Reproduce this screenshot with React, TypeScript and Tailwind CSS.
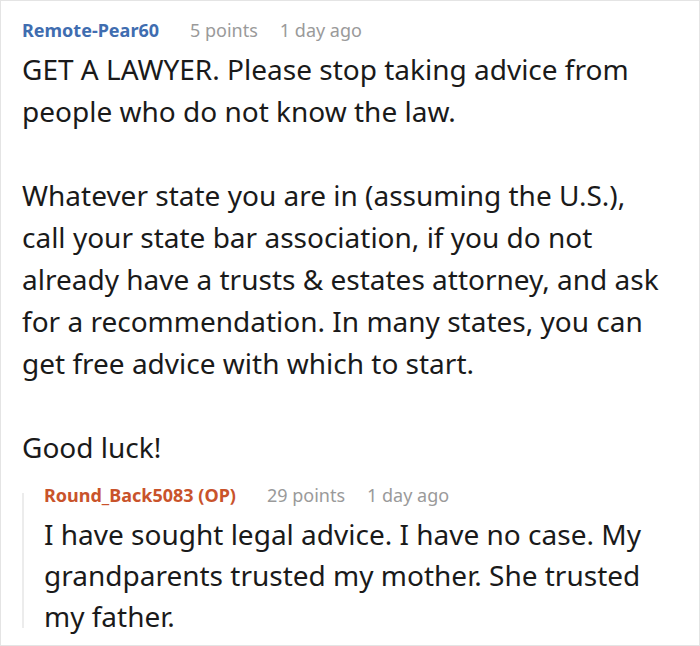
export default function App() {
  const body = "text-[28px] text-[#1a1a1a]";
  return (
    <div
      className="w-[700px] h-[646px] bg-white border border-[#e4e4e4] pl-[21px] overflow-hidden"
      style={{ fontFamily: '"Noto Sans", "Open Sans", sans-serif' }}
    >
      <div className="mt-[17px] flex items-center text-[18px] leading-[24px]">
        <span className="font-bold text-[#3f6db0] mr-[31px]">Remote-Pear60</span>
        <span className="text-[#9a9a9a] mr-[22px]">5 points</span>
        <span className="text-[#9a9a9a]">1 day ago</span>
      </div>
      <div className={`mt-[6px] leading-[42px] ${body}`}>
        <p>
          GET A LAWYER. Please stop taking advice from
          <br />
          people who do not know the law.
        </p>
        <p className="mt-[42px]">
          Whatever state you are in (assuming the U.S.),
          <br />
          call your state bar association, if you do not
          <br />
          already have a trusts &amp; estates attorney, and ask
          <br />
          for a recommendation. In many states, you can
          <br />
          get free advice with which to start.
        </p>
        <p className="mt-[42px]">Good luck!</p>
      </div>
      <div className="mt-[15px] flex">
        <div className="w-[2px] bg-[#ececec] mt-[10px] mb-[9px] shrink-0" />
        <div className="pl-[20px]">
          <div className="flex items-center text-[18px] leading-[24px]">
            <span className="font-bold text-[#c9532b] mr-[31px]">Round_Back5083 (OP)</span>
            <span className="text-[#9a9a9a] mr-[22px]">29 points</span>
            <span className="text-[#9a9a9a]">1 day ago</span>
          </div>
          <p className={`mt-[7px] leading-[41px] ${body}`}>
            I have sought legal advice. I have no case. My
            <br />
            grandparents trusted my mother. She trusted
            <br />
            my father.
          </p>
        </div>
      </div>
    </div>
  );
}
